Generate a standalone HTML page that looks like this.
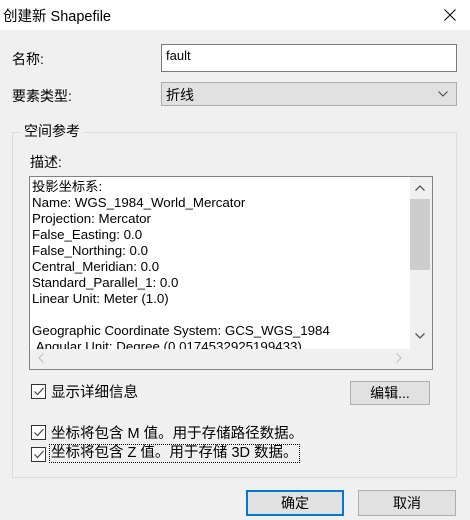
<!DOCTYPE html>
<html><head><meta charset="utf-8"><style>
*{box-sizing:border-box;margin:0;padding:0}
body{width:470px;height:520px;background:#f0f0f0;font-family:"Liberation Sans","Noto Sans CJK SC",sans-serif;font-size:12px;color:#000;position:relative;overflow:hidden}
.a{position:absolute}
.title{left:0;top:0;width:470px;height:30px;background:#fff}
.cb{width:15px;height:15px;border:1px solid #333;background:#fff}
.btn{background:#e1e1e1;border:1px solid #adadad;text-align:center;font-size:14px}
.lines div{height:16px;line-height:16px;white-space:nowrap;font-size:13.3px}
</style></head><body>
<div class="a title"></div>
<div class="a" style="left:3px;top:5px;font-size:14.5px">创建新 Shapefile</div>
<svg class="a" style="left:444px;top:9px" width="12" height="12"><path d="M0.5 0.5L11.5 11.5M11.5 0.5L0.5 11.5" stroke="#000" stroke-width="1"/></svg>
<div class="a" style="left:12px;top:49px;font-size:14px">名称:</div>
<div class="a" style="left:161px;top:44px;width:296px;height:28px;background:#fff;border:1px solid #7a7a7a;padding:3px 4px;font-size:13px">fault</div>
<div class="a" style="left:12px;top:86px;font-size:14px">要素类型:</div>
<div class="a" style="left:161px;top:82px;width:296px;height:24px;background:#e1e1e1;border:1px solid #adadad;padding:2px 4px;font-size:14px">折线</div>
<svg class="a" style="left:438px;top:91px" width="10" height="6"><path d="M0.5 0.5L5 5L9.5 0.5" stroke="#444" fill="none"/></svg>
<div class="a" style="left:12px;top:132px;width:445px;height:346px;border:1px solid #dcdcdc"></div>
<div class="a" style="left:20px;top:121px;padding:0 4px;background:#f0f0f0;font-size:14px">空间参考</div>
<div class="a" style="left:30px;top:152px;font-size:14px">描述:</div>
<div class="a" style="left:29px;top:176px;width:404px;height:194px;border:1px solid #828282;background:#f0f0f0"></div>
<div class="a" style="left:30px;top:177px;width:380px;height:172px;background:#fff;overflow:hidden">
<div class="lines" style="padding:2px 0 0 2px">
<div>投影坐标系:</div><div>Name: WGS_1984_World_Mercator</div><div>Projection: Mercator</div><div>False_Easting: 0.0</div><div>False_Northing: 0.0</div><div>Central_Meridian: 0.0</div><div>Standard_Parallel_1: 0.0</div><div>Linear Unit: Meter (1.0)</div><div>&nbsp;</div><div>Geographic Coordinate System: GCS_WGS_1984</div><div>&nbsp;Angular Unit: Degree (0.0174532925199433)</div>
</div></div>
<div class="a" style="left:410px;top:199px;width:20px;height:71px;background:#cdcdcd"></div>
<svg class="a" style="left:415px;top:185px" width="10" height="6"><path d="M0.5 5.5L5 1L9.5 5.5" stroke="#555" fill="none" stroke-width="1.3"/></svg>
<svg class="a" style="left:415px;top:333px" width="10" height="6"><path d="M0.5 0.5L5 5L9.5 0.5" stroke="#555" fill="none" stroke-width="1.3"/></svg>
<svg class="a" style="left:38px;top:353px" width="6" height="10"><path d="M5.5 0.5L1 5L5.5 9.5" stroke="#bbb" fill="none"/></svg>
<svg class="a" style="left:396px;top:353px" width="6" height="10"><path d="M0.5 0.5L5 5L0.5 9.5" stroke="#bbb" fill="none"/></svg>
<div class="a cb" style="left:31px;top:384px"></div>
<div class="a" style="left:51px;top:381px;font-size:14.5px">显示详细信息</div>
<div class="a btn" style="left:350px;top:381px;width:80px;height:24px;line-height:22px">编辑...</div>
<div class="a cb" style="left:31px;top:425px"></div>
<div class="a" style="left:51px;top:422px;font-size:14.5px">坐标将包含 M 值。用于存储路径数据。</div>
<div class="a cb" style="left:31px;top:447px"></div>
<div class="a" style="left:49px;top:444px;font-size:14.5px;border:1px dotted #000;padding:0 1px;height:19px;line-height:16px">坐标将包含 Z 值。用于存储 3D 数据。</div>
<svg class="a" style="left:33px;top:386px" width="12" height="11"><path d="M1.5 5.5L4.5 8.5L10.5 2" stroke="#444" fill="none" stroke-width="1.2"/></svg>
<svg class="a" style="left:33px;top:427px" width="12" height="11"><path d="M1.5 5.5L4.5 8.5L10.5 2" stroke="#444" fill="none" stroke-width="1.2"/></svg>
<svg class="a" style="left:33px;top:449px" width="12" height="11"><path d="M1.5 5.5L4.5 8.5L10.5 2" stroke="#444" fill="none" stroke-width="1.2"/></svg>
<div class="a btn" style="left:246px;top:490px;width:98px;height:26px;line-height:22px;border:2px solid #0078d7">确定</div>
<div class="a btn" style="left:358px;top:490px;width:98px;height:26px;line-height:24px">取消</div>
</body></html>
